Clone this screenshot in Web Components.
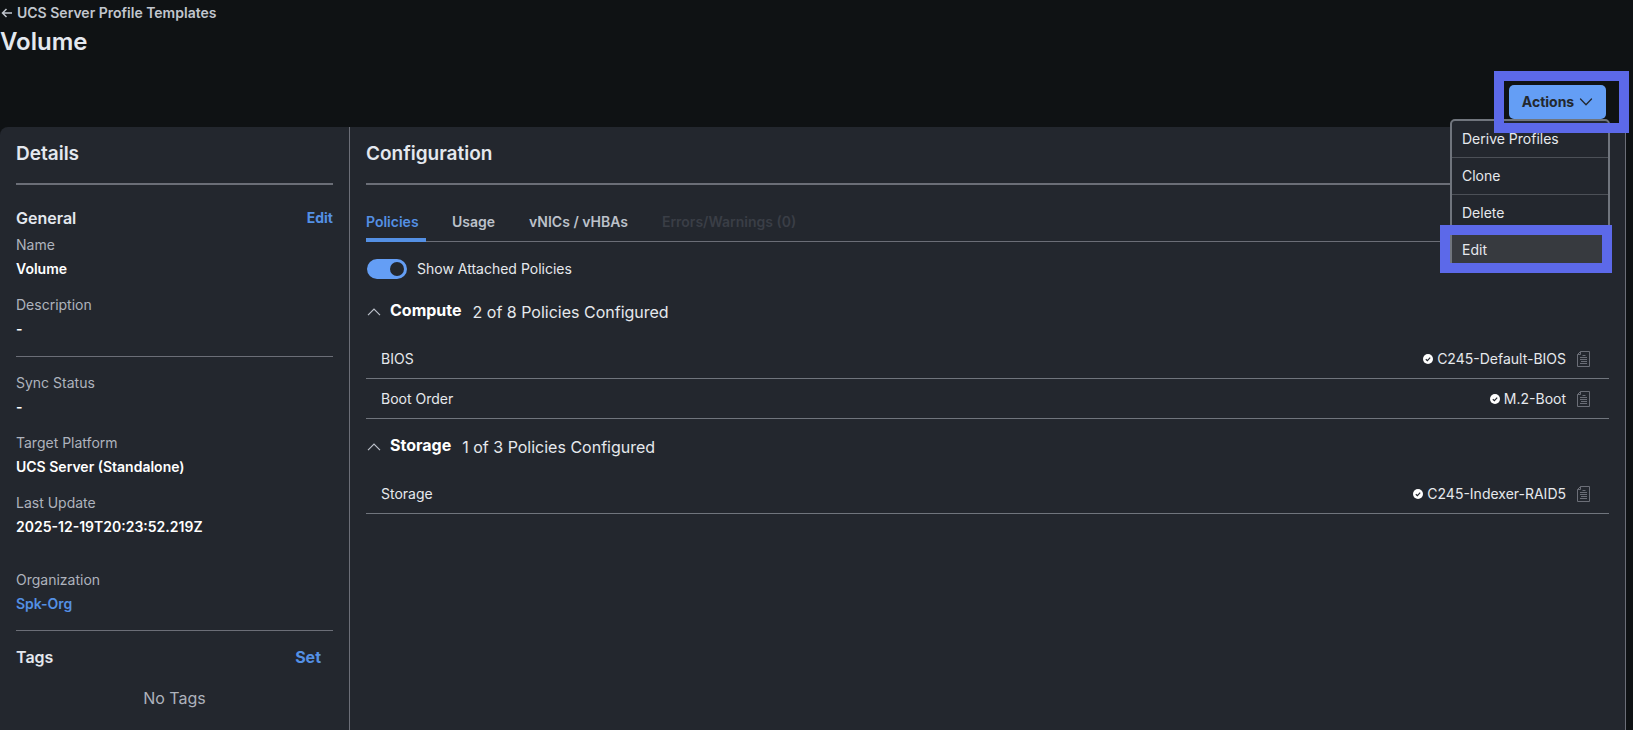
<!DOCTYPE html>
<html lang="en">
<head>
<meta charset="utf-8">
<title>UCS Server Profile Templates</title>
<style>
html, body { height: 100%; }
body { margin: 0; background: #0f1214; color: #fff; font: 14px/20px Inter, "Noto Sans", sans-serif; }
</style>
</head>
<body>
<profile-page></profile-page>

<template id="page-tpl">
<style>
:host { display: flex; flex-direction: column; min-height: 100vh; --line: #6b6e77; --blue: #5490e4; --panel: #23272e; }
.panels { flex: 1; display: grid; grid-template-columns: 349px 1fr; margin-right: 7px; background: var(--panel); border-right: 1px solid var(--line); border-top-left-radius: 8px; }
</style>
<page-header></page-header>
<div class="panels">
  <panel-card heading="Details"><details-panel></details-panel></panel-card>
  <panel-card heading="Configuration" divided><config-panel></config-panel></panel-card>
</div>
</template>

<template id="header-tpl">
<style>
:host { display: flex; flex-direction: column; height: 127px; }
a { display: flex; align-items: center; gap: 4px; margin-top: 3px; padding-left: 1px; color: #c1c6ce; font-weight: 600; text-decoration: none; }
h1 { margin: 4px 0 0; font-size: 24px; line-height: 30px; font-weight: 600; color: #e4e8ee; }
.bar { display: flex; justify-content: flex-end; margin-top: 28px; padding-right: 27px; }
</style>
<a href="#templates"><svg width="12" height="12" viewBox="0 0 12 12" fill="none" stroke="currentColor" stroke-width="1.5"><path d="M11 6H1.5M5.5 2L1.5 6l4 4"/></svg>UCS Server Profile Templates</a>
<h1>Volume</h1>
<div class="bar"><actions-menu></actions-menu></div>
</template>

<template id="actions-tpl">
<style>
:host { display: block; position: relative; }
button { font: inherit; cursor: pointer; box-sizing: border-box; }
.main { display: flex; align-items: center; justify-content: center; gap: 5px; width: 97px; height: 34px; padding: 0; border: 0; border-radius: 5px; background: #649ef5; color: #23282e; font-weight: 700; }
.menu { position: absolute; top: 34px; right: -4px; z-index: 1; width: 160px; box-sizing: border-box; border: 2px solid #70757d; border-radius: 5px; background: #23272e; display: flex; flex-direction: column; }
.menu button { height: 37px; padding: 0 10px; border: 0; border-bottom: 1px solid #4c5057; background: none; color: #e6e9ed; text-align: left; }
.menu button:last-child { background: #373a3f; border-color: #373a3f; }
.mark { position: absolute; z-index: 2; border: 10px solid #5c69e9; box-sizing: border-box; pointer-events: none; }
.mark.button { top: -14px; right: -23px; width: 135px; height: 62px; }
.mark.item { top: 140px; right: -6px; width: 172px; height: 48px; }
</style>
<button class="main" aria-haspopup="menu" aria-expanded="true">Actions<svg width="14" height="10" viewBox="0 0 14 10" fill="none" stroke="currentColor" stroke-width="1.3" stroke-linecap="round" stroke-linejoin="round"><path d="M1.5 2L7 7.7 12.5 2"/></svg></button>
<div class="menu" role="menu">
  <button role="menuitem">Derive Profiles</button>
  <button role="menuitem">Clone</button>
  <button role="menuitem">Delete</button>
  <button role="menuitem">Edit</button>
</div>
<div class="mark button"></div>
<div class="mark item"></div>
</template>

<template id="card-tpl">
<style>
:host { display: block; box-sizing: border-box; padding: 13px 16px 0; }
:host([divided]) { border-left: 1px solid var(--line); }
h2 { margin: 0; padding-bottom: 15px; border-bottom: 2px solid var(--line); font-size: 19px; line-height: 28px; font-weight: 600; color: #e4e8ee; }
</style>
<h2></h2>
<slot></slot>
</template>

<template id="details-tpl">
<style>
:host { display: block; }
.row { display: flex; justify-content: space-between; align-items: center; }
h3 { margin: 0; font-size: 16px; line-height: 24px; font-weight: 600; color: #e4e8ee; }
a { color: var(--blue); font-weight: 600; text-decoration: none; }
.row a { font-weight: 700; }
.general { padding-top: 21px; margin-bottom: 3px; }
.fields { display: flex; flex-direction: column; gap: 12px; }
hr { width: 100%; margin: 0; border: 0; border-top: 1px solid var(--line); }
.one { padding-bottom: 15px; }
.two { padding: 14px 0; }
.org { margin-top: 17px; }
.tags { padding: 14px 12px 0 0; }
.tags a { font-size: 16px; }
p { margin: 17px 0 0; text-align: center; font-size: 16px; line-height: 24px; color: #aeb3bd; }
</style>
<div class="row general"><h3>General</h3><a href="#edit">Edit</a></div>
<div class="fields one">
  <detail-field label="Name">Volume</detail-field>
  <detail-field label="Description">-</detail-field>
</div>
<hr>
<div class="fields two">
  <detail-field label="Sync Status">-</detail-field>
  <detail-field label="Target Platform">UCS Server (Standalone)</detail-field>
  <detail-field label="Last Update">2025-12-19T20:23:52.219Z</detail-field>
  <detail-field class="org" label="Organization"><a href="#org">Spk-Org</a></detail-field>
</div>
<hr>
<div class="row tags"><h3>Tags</h3><a href="#set">Set</a></div>
<p>No Tags</p>
</template>

<template id="field-tpl">
<style>
:host { display: block; }
.label { line-height: 24px; color: #aeb3bd; }
.value { line-height: 24px; font-weight: 600; }
</style>
<div class="label"></div>
<div class="value"><slot></slot></div>
</template>

<template id="config-tpl">
<style>
:host { display: block; }
nav { display: flex; gap: 34px; height: 56px; border-bottom: 1px solid var(--line); margin-bottom: 17px; }
button { display: flex; align-items: flex-end; padding: 0 0 9px; border: 0; margin: 0; background: none; color: #bcc1ca; font: inherit; font-weight: 600; }
button.on { box-sizing: border-box; width: 60px; height: 57px; margin-right: -8px; padding-bottom: 6px; border-bottom: 4px solid var(--blue); color: var(--blue); }
button:disabled { color: #3a3e46; }
</style>
<nav role="tablist">
  <button class="on" role="tab" aria-selected="true">Policies</button>
  <button role="tab">Usage</button>
  <button role="tab">vNICs / vHBAs</button>
  <button role="tab" disabled>Errors/Warnings (0)</button>
</nav>
<toggle-switch>Show Attached Policies</toggle-switch>
<policy-group heading="Compute" summary="2 of 8 Policies Configured">
  <policy-row name="BIOS">C245-Default-BIOS</policy-row>
  <policy-row name="Boot Order">M.2-Boot</policy-row>
</policy-group>
<policy-group heading="Storage" summary="1 of 3 Policies Configured">
  <policy-row name="Storage">C245-Indexer-RAID5</policy-row>
</policy-group>
</template>

<template id="toggle-tpl">
<style>
:host { display: block; padding-left: 1px; margin-bottom: 5px; }
label { display: flex; align-items: center; gap: 10px; width: max-content; color: #e6e9ed; }
input { appearance: none; display: flex; align-items: center; justify-content: flex-end; box-sizing: border-box; width: 40px; height: 20px; margin: 0; padding: 0 3px; border-radius: 10px; background: #649ef5; }
input::before { content: ""; width: 14px; height: 14px; border-radius: 50%; background: #23272e; }
input:not(:checked) { justify-content: flex-start; background: #6b6e77; }
</style>
<label><input type="checkbox" role="switch" checked><slot></slot></label>
</template>

<template id="group-tpl">
<style>
:host { display: block; }
.head { display: flex; align-items: center; height: 55px; padding: 0 0 0 1px; border: 0; background: none; color: inherit; font: inherit; font-size: 16px; line-height: 24px; }
svg { margin: 0 9px 0 0; color: #bcc1ca; }
b { font-weight: 700; margin: 0 11px 4px 0; }
.sum { color: #e6e9ed; }
</style>
<button class="head" aria-expanded="true"><svg width="14" height="10" viewBox="0 0 14 10" fill="none" stroke="currentColor" stroke-width="1.2"><path d="M1 8.2L7 2l6 6.2"/></svg><b></b><span class="sum"></span></button>
<slot></slot>
</template>

<template id="row-tpl">
<style>
:host { display: flex; align-items: center; height: 39px; padding: 0 19px 0 15px; border-bottom: 1px solid #70757d; color: #e6e9ed; }
.name { flex: 1; }
.badge { margin-right: 4px; }
.doc { margin-left: 11px; }
</style>
<span class="name"></span>
<svg class="badge" width="10" height="10" viewBox="0 0 10 10"><circle cx="5" cy="5" r="5" fill="#fff"/><path d="M2.8 5.2l1.6 1.5 2.8-3" fill="none" stroke="#23272e" stroke-width="1.2"/></svg>
<slot></slot>
<svg class="doc" width="13" height="16" viewBox="0 0 13 16" fill="none" stroke="#6b6e77" stroke-width="1"><path d="M3.500 .5h9v15H.5V3.500zM3.500 .5v3H.5M5.500 4.500h3M3 6.500h7M3 8.500h7M4 10.500h6M3 12.500h7"/></svg>
</template>

<script>
const define = (name, tpl, fill) => customElements.define(name, class extends HTMLElement {
  constructor() {
    super();
    this.attachShadow({ mode: 'open' }).append(document.getElementById(tpl).content.cloneNode(true));
  }
  connectedCallback() { if (fill) fill(this, sel => this.shadowRoot.querySelector(sel)); }
});
define('policy-row', 'row-tpl', (el, $) => { $('.name').textContent = el.getAttribute('name'); });
define('policy-group', 'group-tpl', (el, $) => {
  $('b').textContent = el.getAttribute('heading');
  $('.sum').textContent = el.getAttribute('summary');
});
define('toggle-switch', 'toggle-tpl');
define('detail-field', 'field-tpl', (el, $) => { $('.label').textContent = el.getAttribute('label'); });
define('config-panel', 'config-tpl');
define('details-panel', 'details-tpl');
define('panel-card', 'card-tpl', (el, $) => { $('h2').textContent = el.getAttribute('heading'); });
define('actions-menu', 'actions-tpl');
define('page-header', 'header-tpl');
define('profile-page', 'page-tpl');
</script>
</body>
</html>
